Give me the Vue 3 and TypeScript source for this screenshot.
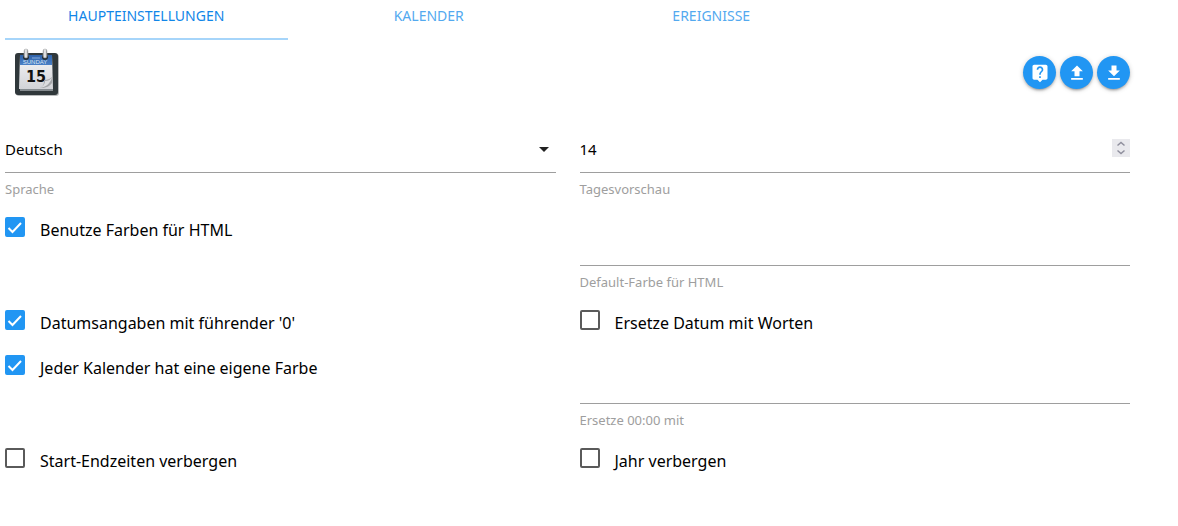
<script setup lang="ts">
import { reactive, ref } from 'vue'

const tabs = ['Haupteinstellungen', 'Kalender', 'Ereignisse']
const activeTab = ref(0)

const settings = reactive({
  language: 'de',
  preview: 14,
  defaultColor: '',
  replaceMidnight: '',
  colorize: true,
  leadingZero: true,
  calendarColors: true,
  replaceDates: false,
  hideTimes: false,
  hideYear: false,
})

type FlagKey = 'colorize' | 'leadingZero' | 'calendarColors' | 'replaceDates' | 'hideTimes' | 'hideYear'
type TextKey = 'defaultColor' | 'replaceMidnight'
type Cell = { kind: 'check'; key: FlagKey; label: string } | { kind: 'text'; key: TextKey; label: string }

const cells: Cell[] = [
  { kind: 'check', key: 'colorize', label: 'Benutze Farben für HTML' },
  { kind: 'text', key: 'defaultColor', label: 'Default-Farbe für HTML' },
  { kind: 'check', key: 'leadingZero', label: "Datumsangaben mit führender '0'" },
  { kind: 'check', key: 'replaceDates', label: 'Ersetze Datum mit Worten' },
  { kind: 'check', key: 'calendarColors', label: 'Jeder Kalender hat eine eigene Farbe' },
  { kind: 'text', key: 'replaceMidnight', label: 'Ersetze 00:00 mit' },
  { kind: 'check', key: 'hideTimes', label: 'Start-Endzeiten verbergen' },
  { kind: 'check', key: 'hideYear', label: 'Jahr verbergen' },
]

const actions = [
  {
    name: 'Hilfe',
    path: 'M19 2H5c-1.1 0-2 .9-2 2v14c0 1.1.9 2 2 2h4l3 3 3-3h4c1.1 0 2-.9 2-2V4c0-1.1-.9-2-2-2zm-6 16h-2v-2h2v2zm2.07-7.75l-.9.92C13.45 11.9 13 12.5 13 14h-2v-.5c0-1.1.45-2.1 1.17-2.83l1.24-1.26c.37-.36.59-.86.59-1.41 0-1.1-.9-2-2-2s-2 .9-2 2H8c0-2.21 1.79-4 4-4s4 1.79 4 4c0 .88-.36 1.68-.93 2.25z',
  },
  { name: 'Hochladen', path: 'M9 16h6v-6h4l-7-7-7 7h4zm-4 2h14v2H5z' },
  { name: 'Herunterladen', path: 'M19 9h-4V3H9v6H5l7 7 7-7zM5 18v2h14v-2H5z' },
]
</script>

<template>
  <div class="page">
    <nav class="tabs">
      <a
        v-for="(tab, i) in tabs"
        :key="tab"
        href="#"
        class="tab"
        :class="{ active: i === activeTab }"
        @click.prevent="activeTab = i"
      >{{ tab }}</a>
    </nav>

    <main class="content">
      <header class="head">
        <svg class="logo" viewBox="0 0 48 50" aria-hidden="true">
          <defs>
            <linearGradient id="paper" x1="0" y1="0" x2="0" y2="1">
              <stop offset="0" stop-color="#f6f6f8" />
              <stop offset="1" stop-color="#d2d3d7" />
            </linearGradient>
            <linearGradient id="banner" x1="0" y1="0" x2="0" y2="1">
              <stop offset="0" stop-color="#2f62aa" />
              <stop offset="1" stop-color="#4a80c6" />
            </linearGradient>
            <linearGradient id="ring" x1="0" y1="0" x2="1" y2="0">
              <stop offset="0" stop-color="#8f9193" />
              <stop offset="0.5" stop-color="#ffffff" />
              <stop offset="1" stop-color="#77797b" />
            </linearGradient>
          </defs>
          <rect x="3" y="7" width="43" height="42" rx="3" fill="#b9bbbc" />
          <rect x="2" y="6" width="43" height="42" rx="3" fill="#30383b" />
          <rect x="7" y="41" width="33" height="3" fill="#858b8f" />
          <path d="M7 8h32l1 34H6z" fill="url(#paper)" />
          <path d="M7 8h32v10H7z" fill="url(#banner)" />
          <circle cx="13" cy="10" r="3" fill="#252e35" />
          <circle cx="32" cy="10" r="3" fill="#252e35" />
          <rect x="11" y="2" width="4" height="9" rx="2" fill="url(#ring)" stroke="#a0a3a5" stroke-width=".5" />
          <rect x="30" y="2" width="4" height="9" rx="2" fill="url(#ring)" stroke="#a0a3a5" stroke-width=".5" />
          <path d="M19 11h8" stroke="#86abd9" stroke-width="1" />
          <text x="22" y="17" class="weekday">SUNDAY</text>
          <text x="23" y="35" class="day">15</text>
          <path d="M27 41c4-2 4-5 4-8 4 0 6-1 8-3v6c-2 3-6 5-12 5z" fill="#a4a6a9" />
          <path d="M27 41c4-2 5-5 5-7 3 0 5-1 7-4-1 6-6 10-12 11z" fill="#dcdddf" />
        </svg>
        <div class="actions">
          <button v-for="action in actions" :key="action.name" type="button" class="round" :aria-label="action.name">
            <svg viewBox="0 0 24 24"><path :d="action.path" /></svg>
          </button>
        </div>
      </header>

      <form class="form" @submit.prevent>
        <div class="field">
          <div class="control">
            <select id="language" v-model="settings.language">
              <option value="de">Deutsch</option>
              <option value="en">English</option>
            </select>
            <svg class="caret" viewBox="0 0 10 5"><path d="M0 0h10L5 5z" /></svg>
          </div>
          <label for="language">Sprache</label>
        </div>

        <div class="field">
          <div class="control">
            <input id="preview" v-model.number="settings.preview" type="number" />
            <div class="stepper">
              <button type="button" aria-label="Mehr" @click="settings.preview++">
                <svg viewBox="0 0 18 9"><path d="M5.500 6.500L9 3.500l3.500 3" /></svg>
              </button>
              <button type="button" aria-label="Weniger" @click="settings.preview--">
                <svg viewBox="0 0 18 9"><path d="M5.500 2.500L9 5.500l3.500-3" /></svg>
              </button>
            </div>
          </div>
          <label for="preview">Tagesvorschau</label>
        </div>

        <template v-for="cell in cells" :key="cell.key">
          <div v-if="cell.kind === 'check'" class="check">
            <span class="box">
              <input :id="cell.key" v-model="settings[cell.key]" type="checkbox" />
              <svg v-if="settings[cell.key]" viewBox="0 0 20 20"><path d="M3.500 11l4 4 8.500-9" /></svg>
            </span>
            <label :for="cell.key">{{ cell.label }}</label>
          </div>
          <div v-else class="field">
            <div class="control">
              <input :id="cell.key" v-model="settings[cell.key]" type="text" />
            </div>
            <label :for="cell.key">{{ cell.label }}</label>
          </div>
        </template>
      </form>
    </main>
  </div>
</template>

<style>
body {
  margin: 0;
  background: #fff;
}
</style>

<style scoped>
.page {
  padding: 0 43px 0 5px;
  font-family: "Noto Sans", "Open Sans", sans-serif;
  color: #000;
}

.tabs {
  display: grid;
  grid-template-columns: repeat(4, 1fr);
}

.tab {
  height: 38px;
  border-bottom: 2px solid transparent;
  font-size: 14px;
  line-height: 32px;
  text-align: center;
  text-transform: uppercase;
  text-decoration: none;
  color: #53a9ef;
}

.tab.active {
  color: #1186e8;
  border-bottom-color: #a6d5fa;
}

.content {
  padding-right: 5px;
}

.head {
  display: flex;
  justify-content: space-between;
  align-items: flex-start;
  padding: 7px 0 27px 8px;
}

.logo {
  width: 48px;
  height: 50px;
}

.weekday {
  font: 6px "Liberation Sans", sans-serif;
  text-anchor: middle;
  fill: #d7e4f4;
}

.day {
  font: 700 16px "DejaVu Sans Condensed", "DejaVu Sans", sans-serif;
  text-anchor: middle;
  fill: #111;
}

.actions {
  display: flex;
  gap: 4px;
  padding-top: 9px;
}

.round {
  display: grid;
  place-items: center;
  width: 33px;
  height: 33px;
  padding: 0;
  border: 0;
  border-radius: 50%;
  background: #2196f3;
  box-shadow: 0 2px 2px rgba(0, 0, 0, 0.14), 0 3px 1px -2px rgba(0, 0, 0, 0.12), 0 1px 5px rgba(0, 0, 0, 0.2);
  cursor: pointer;
}

.round svg {
  width: 20px;
  height: 20px;
  fill: #fff;
}

.form {
  display: grid;
  grid-template-columns: 1fr 1fr;
  column-gap: 24px;
}

.field {
  min-height: 93px;
}

.control {
  position: relative;
  display: flex;
  align-items: center;
  height: 48px;
  border-bottom: 1px solid #9e9e9e;
}

.control input,
.control select {
  flex: 1;
  min-width: 0;
  height: 48px;
  padding: 2px 0 0;
  border: 0;
  outline: 0;
  background: transparent;
  font: inherit;
  font-size: 15px;
  color: #000;
  appearance: none;
}

.control input[type="number"] {
  appearance: textfield;
}

.caret {
  position: absolute;
  right: 7px;
  top: 23px;
  width: 10px;
  height: 5px;
  fill: #212121;
  pointer-events: none;
}

.stepper {
  display: grid;
  width: 18px;
  background: #e9e9ed;
}

.stepper button {
  display: block;
  height: 9px;
  padding: 0;
  border: 0;
  background: transparent;
}

.stepper svg {
  display: block;
  width: 18px;
  height: 9px;
  fill: none;
  stroke: #8f8f9d;
  stroke-width: 1.5;
}

.field > label {
  display: block;
  padding-top: 6px;
  font-size: 13px;
  line-height: 20px;
  color: #9e9e9e;
}

.check {
  display: flex;
  gap: 15px;
  min-height: 45px;
}

.box {
  position: relative;
  flex: none;
  width: 20px;
  height: 20px;
}

.box input {
  display: block;
  box-sizing: border-box;
  width: 20px;
  height: 20px;
  margin: 0;
  border: 2px solid #5a5a5a;
  border-radius: 2px;
  appearance: none;
}

.box input:checked {
  border-color: #2196f3;
  background: #2196f3;
}

.box svg {
  position: absolute;
  inset: 0;
  fill: none;
  stroke: #fff;
  stroke-width: 2;
  pointer-events: none;
}

.check label {
  font-size: 16px;
  line-height: 26px;
}
</style>
